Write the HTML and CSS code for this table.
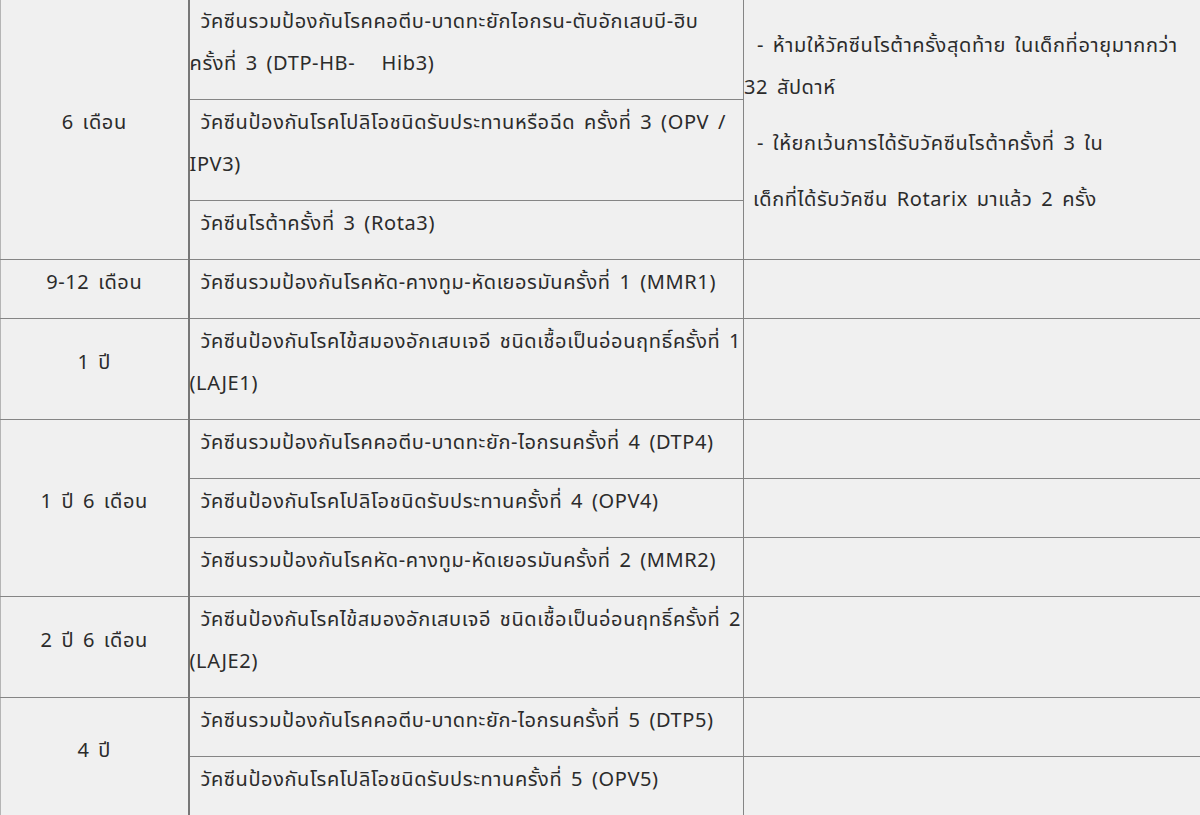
FILE: index.html
```html
<!DOCTYPE html>
<html lang="th">
<head>
<meta charset="utf-8">
<title>ตารางวัคซีน</title>
<link rel="stylesheet" href="styles.css">
</head>
<body>
<table class="vac">
  <colgroup>
    <col class="c-age">
    <col class="c-vac">
    <col class="c-note">
  </colgroup>
  <tr>
    <td class="age" rowspan="3"><p>6 เดือน</p></td>
    <td class="vac-cell"><p>วัคซีนรวมป้องกันโรคคอตีบ-บาดทะยักไอกรน-ตับอักเสบบี-ฮิบ<br>ครั้งที่ 3 (DTP-HB-&nbsp;&nbsp; Hib3)</p></td>
    <td class="note" rowspan="3">
      <p class="n1">- ห้ามให้วัคซีนโรต้าครั้งสุดท้าย ในเด็กที่อายุมากกว่า<br>32 สัปดาห์</p>
      <p class="n1">- ให้ยกเว้นการได้รับวัคซีนโรต้าครั้งที่ 3 ใน</p>
      <p class="n2">เด็กที่ได้รับวัคซีน Rotarix มาแล้ว 2 ครั้ง</p>
    </td>
  </tr>
  <tr>
    <td class="vac-cell"><p>วัคซีนป้องกันโรคโปลิโอชนิดรับประทานหรือฉีด ครั้งที่ 3 (OPV /<br>IPV3)</p></td>
  </tr>
  <tr>
    <td class="vac-cell"><p>วัคซีนโรต้าครั้งที่ 3 (Rota3)</p></td>
  </tr>
  <tr>
    <td class="age"><p>9-12 เดือน</p></td>
    <td class="vac-cell"><p>วัคซีนรวมป้องกันโรคหัด-คางทูม-หัดเยอรมันครั้งที่ 1 (MMR1)</p></td>
    <td class="note"></td>
  </tr>
  <tr>
    <td class="age"><p>1 ปี</p></td>
    <td class="vac-cell"><p>วัคซีนป้องกันโรคไข้สมองอักเสบเจอี ชนิดเชื้อเป็นอ่อนฤทธิ์ครั้งที่ 1<br>(LAJE1)</p></td>
    <td class="note"></td>
  </tr>
  <tr>
    <td class="age" rowspan="3"><p>1 ปี 6 เดือน</p></td>
    <td class="vac-cell"><p>วัคซีนรวมป้องกันโรคคอตีบ-บาดทะยัก-ไอกรนครั้งที่ 4 (DTP4)</p></td>
    <td class="note"></td>
  </tr>
  <tr>
    <td class="vac-cell"><p>วัคซีนป้องกันโรคโปลิโอชนิดรับประทานครั้งที่ 4 (OPV4)</p></td>
    <td class="note"></td>
  </tr>
  <tr>
    <td class="vac-cell"><p>วัคซีนรวมป้องกันโรคหัด-คางทูม-หัดเยอรมันครั้งที่ 2 (MMR2)</p></td>
    <td class="note"></td>
  </tr>
  <tr>
    <td class="age"><p>2 ปี 6 เดือน</p></td>
    <td class="vac-cell"><p>วัคซีนป้องกันโรคไข้สมองอักเสบเจอี ชนิดเชื้อเป็นอ่อนฤทธิ์ครั้งที่ 2<br>(LAJE2)</p></td>
    <td class="note"></td>
  </tr>
  <tr>
    <td class="age" rowspan="2"><p>4 ปี</p></td>
    <td class="vac-cell"><p>วัคซีนรวมป้องกันโรคคอตีบ-บาดทะยัก-ไอกรนครั้งที่ 5 (DTP5)</p></td>
    <td class="note"></td>
  </tr>
  <tr>
    <td class="vac-cell"><p>วัคซีนป้องกันโรคโปลิโอชนิดรับประทานครั้งที่ 5 (OPV5)</p></td>
    <td class="note"></td>
  </tr>
</table>
</body>
</html>
```

FILE: styles.css
```css
html, body {
  margin: 0;
  padding: 0;
  background: #f0f0f0;
  overflow: hidden;
}

body {
  font-family: "Noto Sans Thai", "Leelawadee UI", "Noto Sans", "DejaVu Sans", sans-serif;
  font-size: 20px;
  color: #2b2b2b;
  letter-spacing: 0.6px;
  word-spacing: 3px;
}

.vac {
  border-collapse: collapse;
  table-layout: fixed;
  width: 1206px;
  margin-top: -2px;
}

.c-age { width: 188px; }
.c-vac { width: 555px; }
.c-note { width: 463px; }

.vac td {
  border: 1px solid #858585;
  padding: 2px 0 0 0;
  vertical-align: middle;
  line-height: 42px;
}

.vac td p {
  margin: 0 0 14px 0;
  white-space: nowrap;
}

.vac td.age {
  text-align: center;
  border-left: 1px solid #b5b5b5;
  border-right: 2px solid #777777;
}

.vac td.vac-cell p {
  text-indent: 11px;
}

.vac td.note p.n1 {
  text-indent: 13px;
}

.vac td.note p.n2 {
  text-indent: 9px;
}
```
